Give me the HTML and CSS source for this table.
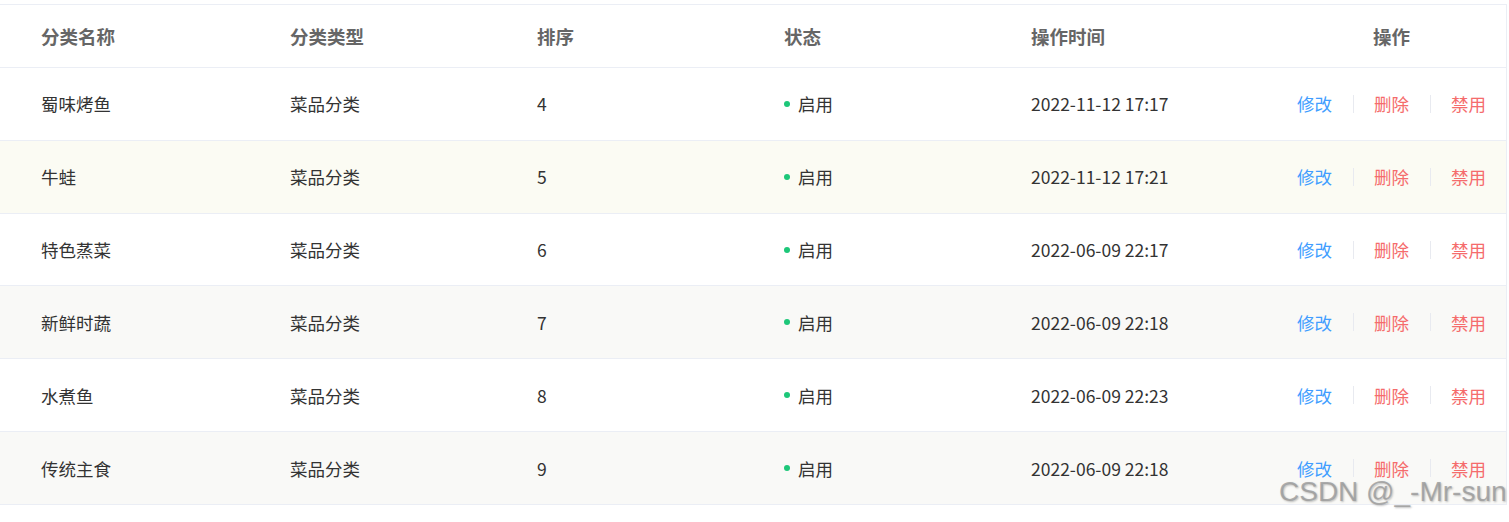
FILE: index.html
```html
<!DOCTYPE html>
<html lang="zh-CN">
<head>
<meta charset="utf-8">
<title>分类管理</title>
<link rel="stylesheet" href="styles.css">
</head>
<body>
<div class="table">
  <div class="row head">
    <div class="cell">分类名称</div>
    <div class="cell">分类类型</div>
    <div class="cell">排序</div>
    <div class="cell">状态</div>
    <div class="cell">操作时间</div>
    <div class="cell ops">操作</div>
  </div>
  <div class="row">
    <div class="cell">蜀味烤鱼</div>
    <div class="cell">菜品分类</div>
    <div class="cell">4</div>
    <div class="cell"><span class="dot"></span>启用</div>
    <div class="cell">2022-11-12 17:17</div>
    <div class="cell ops"><span class="btn edit">修改</span><span class="btn del">删除</span><span class="btn del">禁用</span></div>
  </div>
  <div class="row hover">
    <div class="cell">牛蛙</div>
    <div class="cell">菜品分类</div>
    <div class="cell">5</div>
    <div class="cell"><span class="dot"></span>启用</div>
    <div class="cell">2022-11-12 17:21</div>
    <div class="cell ops"><span class="btn edit">修改</span><span class="btn del">删除</span><span class="btn del">禁用</span></div>
  </div>
  <div class="row">
    <div class="cell">特色蒸菜</div>
    <div class="cell">菜品分类</div>
    <div class="cell">6</div>
    <div class="cell"><span class="dot"></span>启用</div>
    <div class="cell">2022-06-09 22:17</div>
    <div class="cell ops"><span class="btn edit">修改</span><span class="btn del">删除</span><span class="btn del">禁用</span></div>
  </div>
  <div class="row stripe">
    <div class="cell">新鲜时蔬</div>
    <div class="cell">菜品分类</div>
    <div class="cell">7</div>
    <div class="cell"><span class="dot"></span>启用</div>
    <div class="cell">2022-06-09 22:18</div>
    <div class="cell ops"><span class="btn edit">修改</span><span class="btn del">删除</span><span class="btn del">禁用</span></div>
  </div>
  <div class="row">
    <div class="cell">水煮鱼</div>
    <div class="cell">菜品分类</div>
    <div class="cell">8</div>
    <div class="cell"><span class="dot"></span>启用</div>
    <div class="cell">2022-06-09 22:23</div>
    <div class="cell ops"><span class="btn edit">修改</span><span class="btn del">删除</span><span class="btn del">禁用</span></div>
  </div>
  <div class="row stripe">
    <div class="cell">传统主食</div>
    <div class="cell">菜品分类</div>
    <div class="cell">9</div>
    <div class="cell"><span class="dot"></span>启用</div>
    <div class="cell">2022-06-09 22:18</div>
    <div class="cell ops"><span class="btn edit">修改</span><span class="btn del">删除</span><span class="btn del">禁用</span></div>
  </div>
</div>
<div class="watermark">CSDN @_-Mr-sun</div>
</body>
</html>
```
FILE: styles.css
```css
html, body {
  margin: 0;
  padding: 0;
  background: #ffffff;
}
body {
  font-family: "Microsoft YaHei", "Noto Sans CJK SC", "Noto Sans", sans-serif;
  color: #333333;
  font-size: 17.5px;
}
.table {
  margin-top: 4px;
  width: 1506px;
  border-top: 1px solid #ebeef5;
  border-right: 1px solid #ebeef5;
}
.row {
  display: grid;
  grid-template-columns: 249px 247px 247px 247px 247px 1fr;
  height: 71.83px;
  border-bottom: 1px solid #ebeef5;
  align-items: center;
}
.row.head {
  height: 62px;
  font-weight: bold;
  color: #666666;
  font-size: 18.5px;
}
.row.hover {
  background: #fbfbf3;
}
.row.stripe {
  background: #f9f9f7;
}
.cell {
  padding-left: 41px;
  display: flex;
  align-items: center;
  white-space: nowrap;
}
.cell.ops {
  justify-content: center;
  padding-left: 40px;
}
.dot {
  width: 6px;
  height: 6px;
  border-radius: 50%;
  background: #1dc779;
  margin-right: 8px;
}
.btn {
  position: relative;
  padding: 0 21px;
}
.btn:first-child {
  padding-left: 0;
}
.btn:last-child {
  padding-right: 0;
}
.btn + .btn::before {
  content: "";
  position: absolute;
  left: 0;
  top: 50%;
  margin-top: -9px;
  height: 18px;
  width: 1px;
  background: #e8eaf0;
}
.btn.edit {
  color: #419eff;
}
.btn.del {
  color: #f56c6c;
}
.watermark {
  position: absolute;
  left: 1279px;
  top: 476px;
  font-family: "Liberation Sans", Arial, sans-serif;
  font-size: 28px;
  color: rgba(150, 150, 150, 0.75);
  text-shadow: 1px 1px 2px rgba(0, 0, 0, 0.25);
  white-space: nowrap;
}
```
